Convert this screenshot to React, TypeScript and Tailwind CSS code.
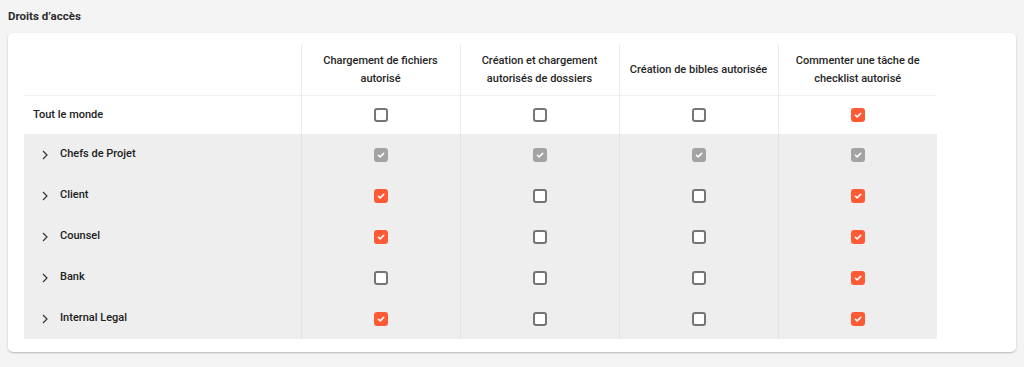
import React from 'react';

type Cell = 'on' | 'off' | 'locked';

interface Row {
  label: string;
  group: boolean;
  cells: Cell[];
}

const columns = [
  ['Chargement de fichiers', 'autorisé'],
  ['Création et chargement', 'autorisés de dossiers'],
  ['Création de bibles autorisée'],
  ['Commenter une tâche de', 'checklist autorisé'],
];

const rows: Row[] = [
  { label: 'Tout le monde', group: false, cells: ['off', 'off', 'off', 'on'] },
  { label: 'Chefs de Projet', group: true, cells: ['locked', 'locked', 'locked', 'locked'] },
  { label: 'Client', group: true, cells: ['on', 'off', 'off', 'on'] },
  { label: 'Counsel', group: true, cells: ['on', 'off', 'off', 'on'] },
  { label: 'Bank', group: true, cells: ['off', 'off', 'off', 'on'] },
  { label: 'Internal Legal', group: true, cells: ['on', 'off', 'off', 'on'] },
];

const Check = () => (
  <svg width="10" height="10" viewBox="0 0 10 10" fill="none">
    <path d="M2.4 5.2 L4.2 6.9 L7.7 3.4" stroke="white" strokeWidth="1.5" strokeLinecap="round" strokeLinejoin="round" />
  </svg>
);

const Box: React.FC<{ state: Cell }> = ({ state }) => {
  if (state === 'off') {
    return <span className="inline-block w-[14px] h-[14px] rounded-[3px] border-2 border-[#757575] bg-white" />;
  }
  return (
    <span
      className={
        'inline-flex w-[14px] h-[14px] items-center justify-center rounded-[3px] ' +
        (state === 'on' ? 'bg-[#ff5a36]' : 'bg-[#a3a3a3]')
      }
    >
      <Check />
    </span>
  );
};

const Chevron = () => (
  <svg width="8" height="10" viewBox="0 0 8 10" fill="none">
    <path d="M2 1 L6 5 L2 9" stroke="#333" strokeWidth="1.2" />
  </svg>
);

export default function App() {
  return (
    <div
      className="min-h-[367px] bg-[#f4f4f4] px-2 pt-[9px] text-[#212121]"
      style={{ fontFamily: 'Roboto, "Liberation Sans", sans-serif' }}
    >
      <h2 className="text-[11.5px] font-bold leading-[14px] text-[#2b2b2b]">Droits d’accès</h2>
      <div className="mt-[10px] rounded-[5px] bg-white pl-4 pt-3 pb-[13px] shadow-[0_1px_2px_rgba(0,0,0,0.25)]">
        <table className="border-collapse text-[11px] font-medium">
          <thead>
            <tr className="h-[50px] border-b border-[#f0f0f0]">
              <th className="w-[277px]" />
              {columns.map((c, i) => (
                <th key={i} className="w-[159px] border-l border-[#ececec] text-center font-medium text-[#262626] leading-[18px] align-middle">
                  {c.map((l) => (
                    <div key={l}>{l}</div>
                  ))}
                </th>
              ))}
            </tr>
          </thead>
          <tbody>
            {rows.map((r) => (
              <tr key={r.label} className={r.group ? 'h-[41px] bg-[#eeeeee]' : 'h-[39px] bg-white'}>
                <td className="p-0">
                  {r.group ? (
                    <div className="flex items-center pl-[17px]">
                      <Chevron />
                      <span className="ml-[11px]">{r.label}</span>
                    </div>
                  ) : (
                    <span className="pl-[9px]">{r.label}</span>
                  )}
                </td>
                {r.cells.map((c, i) => (
                  <td key={i} className={'border-l text-center align-middle ' + (r.group ? 'border-[#e3e3e3]' : 'border-[#ececec]')}>
                    <div className="flex justify-center">
                      <Box state={c} />
                    </div>
                  </td>
                ))}
              </tr>
            ))}
          </tbody>
        </table>
      </div>
    </div>
  );
}
